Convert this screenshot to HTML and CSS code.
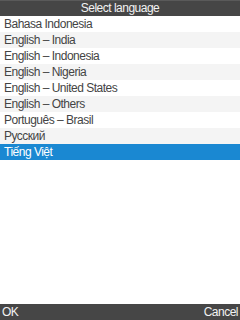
FILE: index.html
```html
<!DOCTYPE html>
<html lang="en">
<head>
    <meta charset="UTF-8">
    <meta name="viewport" content="width=device-width, initial-scale=1.0">
    <title>Select language</title>
    <link rel="stylesheet" href="styles.css">
</head>
<body>
    <div class="screen">
        <header class="title-bar">Select language</header>

        <ul class="lang-list">
            <li class="lang-item">Bahasa Indonesia</li>
            <li class="lang-item">English – India</li>
            <li class="lang-item">English – Indonesia</li>
            <li class="lang-item">English – Nigeria</li>
            <li class="lang-item">English – United States</li>
            <li class="lang-item">English – Others</li>
            <li class="lang-item">Português – Brasil</li>
            <li class="lang-item">Русский</li>
            <li class="lang-item selected">Tiếng Việt</li>
        </ul>

        <footer class="soft-keys">
            <span class="soft-key">OK</span>
            <span class="soft-key">Cancel</span>
        </footer>
    </div>
</body>
</html>
```

FILE: styles.css
```css
:root {
    --bar: #464646;
    --bar-top: #5a5a5a;
    --bar-text: #f2f2f2;
    --text: #444444;
    --row-alt: #f4f4f4;
    --selected: #1a88d2;
}

* {
    margin: 0;
    padding: 0;
    box-sizing: border-box;
    font-family: 'Liberation Sans', Arial, sans-serif;
    letter-spacing: -0.5px;
}

body {
    background-color: white;
}

.screen {
    width: 240px;
    height: 320px;
    display: flex;
    flex-direction: column;
    overflow: hidden;
}

.title-bar {
    height: 16px;
    line-height: 15px;
    background-color: var(--bar);
    border-top: 1px solid var(--bar-top);
    color: var(--bar-text);
    font-size: 12px;
    text-align: center;
}

.lang-list {
    list-style: none;
    flex: 1;
}

.lang-item {
    height: 16px;
    line-height: 16px;
    padding-left: 4px;
    font-size: 12px;
    color: var(--text);
    white-space: nowrap;
}

.lang-item:nth-child(even) {
    background-color: var(--row-alt);
}

.lang-item.selected {
    background-color: var(--selected);
    color: white;
}

.soft-keys {
    height: 16px;
    line-height: 16px;
    background-color: var(--bar);
    color: var(--bar-text);
    font-size: 12px;
    display: flex;
    justify-content: space-between;
    padding: 0 2px 0 2px;
}
```
